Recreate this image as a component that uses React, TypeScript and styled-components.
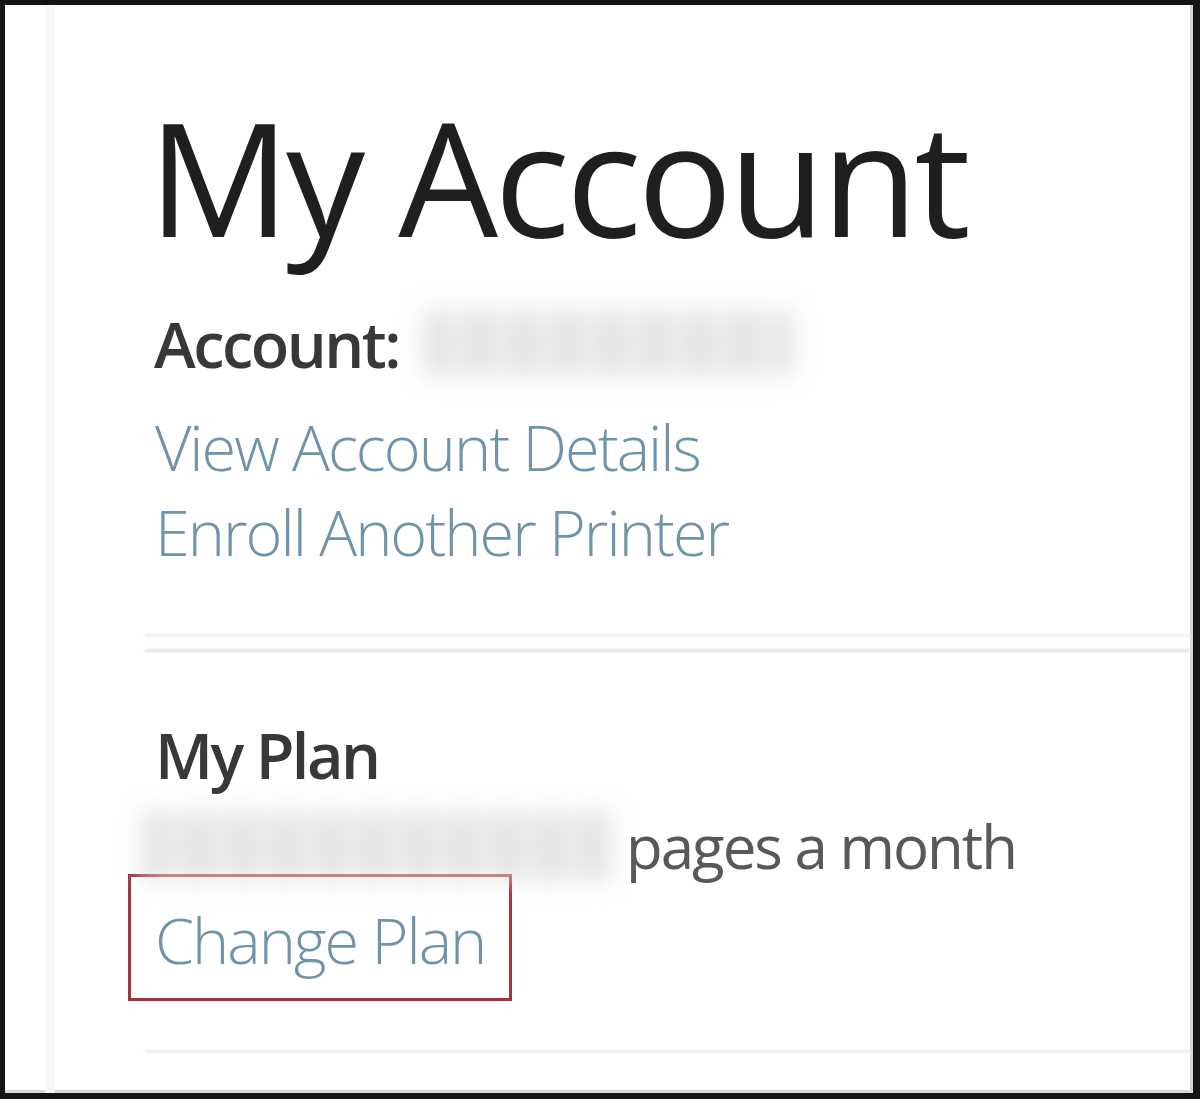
import React from "react";
import styled, { createGlobalStyle } from "styled-components";

const Global = createGlobalStyle`
  html, body { margin: 0; padding: 0; background: #ffffff; }
  body { font-family: "Open Sans", "Noto Sans", sans-serif; }
`;

const Frame = styled.div`
  box-sizing: border-box;
  width: 1200px;
  height: 1099px;
  border-style: solid;
  border-color: #141414;
  border-width: 5px 7px 6px 5px;
  box-shadow: inset -3px -3px 0 #d6d6d6;
  display: flex;
  overflow: hidden;
  background: #fff;
`;

const Gutter = styled.div`
  width: 50px;
  flex: none;
  display: flex;
  justify-content: flex-end;
`;

const GutterLine = styled.div`
  width: 10px;
  background: #f7f7f7;
`;

const Content = styled.div`
  flex: 1;
  padding: 0 3px 0 90px;
  display: flex;
  flex-direction: column;
`;

const Title = styled.h1`
  margin: 92px 0 0 0;
  font-size: 158px;
  line-height: 158px;
  font-weight: 400;
  letter-spacing: -4px;
  color: #1f1f22;
  padding-left: 3px;
`;

const AccountRow = styled.div`
  margin-top: 55px;
  display: flex;
  align-items: center;
  gap: 24px;
  padding-left: 9px;
`;

const Label = styled.span`
  font-size: 63px;
  line-height: 1;
  font-weight: 600;
  letter-spacing: -2.5px;
  color: #383838;
`;

const Redacted = styled.span<{ $w: number; $h: number }>`
  display: inline-block;
  width: ${(p) => p.$w}px;
  height: ${(p) => p.$h}px;
  background: repeating-linear-gradient(
    90deg,
    #dedede 0px,
    #d3d3d3 18px,
    #e9e9e9 30px,
    #dedede 44px
  );
  filter: blur(11px);
  opacity: 0.7;
`;

const LinkList = styled.div`
  margin-top: 28px;
  display: flex;
  flex-direction: column;
  padding-left: 10px;
`;

const TextLink = styled.a`
  font-size: 63px;
  line-height: 85px;
  font-weight: 300;
  letter-spacing: -2px;
  color: #6f94a8;
  text-decoration: none;
  align-self: flex-start;
`;

const Divider = styled.div<{ $tone: string; $gap: number }>`
  height: 3px;
  background: ${(p) => p.$tone};
  margin-top: ${(p) => p.$gap}px;
  filter: blur(1px);
`;

const Section = styled.div`
  margin-top: 71px;
  padding-left: 10px;
  display: flex;
  flex-direction: column;
`;

const PlanRow = styled.div`
  margin-top: 25px;
  display: flex;
  align-items: center;
  gap: 14px;
  margin-left: -13px;
`;

const PlanText = styled.span`
  font-size: 60px;
  line-height: 1;
  font-weight: 400;
  letter-spacing: -2px;
  color: #585858;
`;

const Highlight = styled.div`
  align-self: flex-start;
  margin-left: -27px;
  margin-top: -7px;
  border: 3px solid #a8323c;
  padding: 20px 24px 16px 24px;
`;

export default function App() {
  return (
    <>
      <Global />
      <Frame>
        <Gutter>
          <GutterLine />
        </Gutter>
        <Content>
          <Title>My Account</Title>
          <AccountRow>
            <Label>Account:</Label>
            <Redacted $w={370} $h={66} />
          </AccountRow>
          <LinkList>
            <TextLink href="#">View Account Details</TextLink>
            <TextLink href="#">Enroll Another Printer</TextLink>
          </LinkList>
          <Divider $tone="#efefef" $gap={60} />
          <Divider $tone="#e3e3e3" $gap={12} />
          <Section>
            <Label>My Plan</Label>
            <PlanRow>
              <Redacted $w={470} $h={70} />
              <PlanText>pages a month</PlanText>
            </PlanRow>
            <Highlight>
              <TextLink href="#">Change Plan</TextLink>
            </Highlight>
          </Section>
          <Divider $tone="#ececec" $gap={49} />
        </Content>
      </Frame>
    </>
  );
}
